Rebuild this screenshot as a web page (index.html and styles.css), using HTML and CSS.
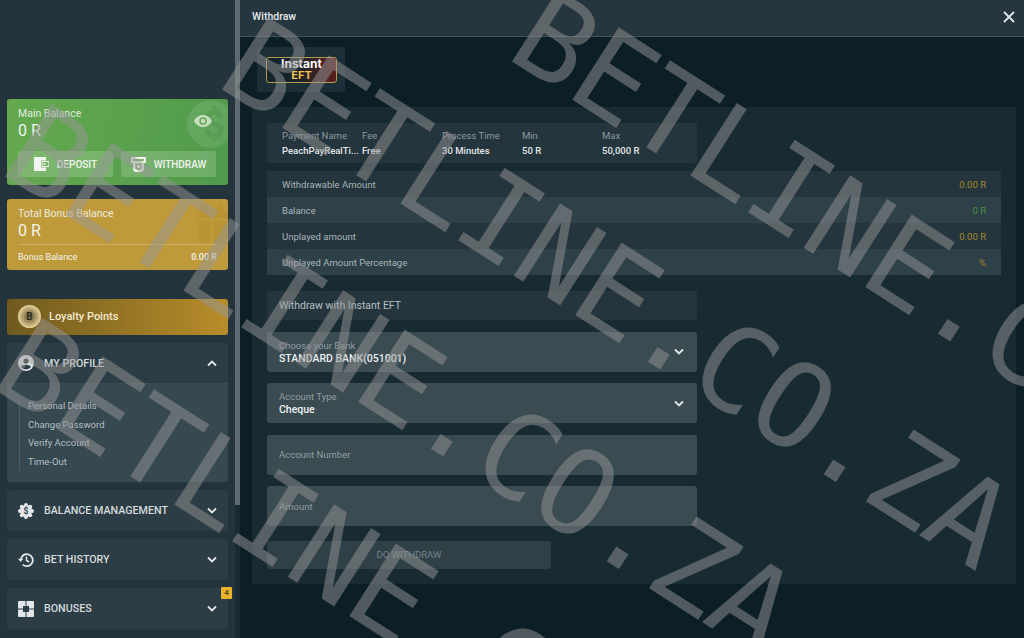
FILE: index.html
```html
<!DOCTYPE html>
<html lang="en">
<head>
    <meta charset="UTF-8">
    <meta name="viewport" content="width=device-width, initial-scale=1.0">
    <title>Withdraw</title>
    <link rel="stylesheet" href="styles.css">
</head>
<body>

<div class="layout">
    <!-- Left menu -->
    <aside class="sidebar">
        <div class="card card-main">
            <svg class="card-bg" width="41" height="50" viewBox="0 0 41 50"><circle cx="24" cy="25" r="24" fill="#fff" opacity=".1"/><text x="27" y="39" font-size="38" font-weight="700" text-anchor="middle" fill="#3f8a3f" opacity=".28" font-family="Roboto, sans-serif">$</text></svg>
            <svg class="eye" width="18" height="12" viewBox="0 0 24 16"><path fill-rule="evenodd" d="M12 0C6.500 0 2.300 3.300 0 8c2.300 4.700 6.500 8 12 8s9.700-3.300 12-8c-2.300-4.700-6.500-8-12-8zm0 13a5 5 0 1 1 0-10 5 5 0 0 1 0 10zm0-8a3 3 0 1 0 0 6 3 3 0 0 0 0-6z" fill="#c5dfbd"/></svg>
            <div class="card-label">Main Balance</div>
            <div class="card-amount">0 R</div>
            <div class="card-actions">
                <div class="card-btn">
                    <svg width="15" height="14" viewBox="0 0 15 14"><path d="M0 0h12v3.500H7v7h5V14H0z" fill="#f2f5ef"/><path d="M8 4.500h7v5H8z" fill="none" stroke="#f2f5ef"/><circle cx="10.500" cy="7" r="1" fill="#f2f5ef"/></svg>
                    DEPOSIT
                </div>
                <div class="card-btn">
                    <svg width="15" height="15" viewBox="0 0 15 15"><path d="M0 0h15v6h-2v7l-2 2H4l-2-2V6H0z" fill="#f2f5ef"/><rect x="2" y="2" width="11" height="2" fill="#7fb26f"/><path d="M4.500 6.500h6v5l-1 1h-4l-1-1z" fill="#7fb26f"/><rect x="6" y="8" width="3" height="3" fill="#f2f5ef"/></svg>
                    WITHDRAW
                </div>
            </div>
        </div>

        <div class="card card-bonus">
            <svg class="card-bg" width="38" height="44" viewBox="0 0 38 44"><path d="M6 12h32v7H6zM9 22h12v22H9zM24 22h14v22H24zM14 4l7 7h3l7-7 4 4-4 4H10L9 8z" fill="#a98427" opacity=".25"/></svg>
            <div class="card-label">Total Bonus Balance</div>
            <div class="card-amount">0 R</div>
            <div class="bonus-row">
                <span>Bonus Balance</span>
                <span class="bonus-value">0.00 R</span>
            </div>
        </div>

        <div class="loyalty">
            <div class="coin">B</div>
            Loyalty Points
        </div>

        <div class="menu-item menu-open">
            <div class="menu-head">
                <svg class="menu-icon" width="16" height="16" viewBox="0 0 16 16"><circle cx="8" cy="8" r="8" fill="#e3e7e9"/><circle cx="8" cy="6" r="2.600" fill="#2c3d45"/><path d="M3 12c.8-1.500 3-2.200 5-2.200s4.200.7 5 2.200a6.300 6.300 0 0 1-10 0z" fill="#2c3d45"/></svg>
                <span class="menu-title">MY PROFILE</span>
                <svg class="chevron" width="10" height="7" viewBox="0 0 10 7"><path d="M1 5.500l4-4 4 4" fill="none" stroke="#e3e7e9" stroke-width="1.800"/></svg>
            </div>
            <div class="submenu">
                <div class="submenu-links">
                    <div>Personal Details</div>
                    <div>Change Password</div>
                    <div>Verify Account</div>
                    <div>Time-Out</div>
                </div>
            </div>
        </div>

        <div class="menu-item">
            <div class="menu-head">
                <svg class="menu-icon" width="16" height="16" viewBox="0 0 16 16"><g fill="#e3e7e9"><circle cx="8" cy="8" r="6"/><circle cx="8" cy="2" r="2"/><circle cx="8" cy="14" r="2"/><circle cx="2" cy="8" r="2"/><circle cx="14" cy="8" r="2"/><circle cx="3.800" cy="3.800" r="2"/><circle cx="12.200" cy="3.800" r="2"/><circle cx="3.800" cy="12.200" r="2"/><circle cx="12.200" cy="12.200" r="2"/></g><text x="8" y="11" font-size="8.500" font-weight="700" text-anchor="middle" fill="#2c3d45" font-family="Roboto, sans-serif">$</text></svg>
                <span class="menu-title">BALANCE MANAGEMENT</span>
                <svg class="chevron" width="10" height="7" viewBox="0 0 10 7"><path d="M1 1.500l4 4 4-4" fill="none" stroke="#e3e7e9" stroke-width="1.800"/></svg>
            </div>
        </div>

        <div class="menu-item">
            <div class="menu-head">
                <svg class="menu-icon" width="16" height="16" viewBox="0 0 16 16"><path d="M2.800 7.500a6 6 0 1 1 1.900 5.100" fill="none" stroke="#e3e7e9" stroke-width="1.800"/><path d="M0 6.800h5.400L2.700 10z" fill="#e3e7e9"/><path d="M8.500 4.500v4l2.700 1.500" fill="none" stroke="#e3e7e9" stroke-width="1.500"/></svg>
                <span class="menu-title">BET HISTORY</span>
                <svg class="chevron" width="10" height="7" viewBox="0 0 10 7"><path d="M1 1.500l4 4 4-4" fill="none" stroke="#e3e7e9" stroke-width="1.800"/></svg>
            </div>
        </div>

        <div class="menu-item">
            <span class="badge">4</span>
            <div class="menu-head">
                <svg class="menu-icon" width="16" height="16" viewBox="0 0 16 16"><rect width="16" height="16" rx="1" fill="#e3e7e9"/><path d="M8 0v5M8 11v5M0 8h5M11 8h5" stroke="#2c3d45" stroke-width="1"/><rect x="5" y="5" width="6" height="6" fill="#2c3d45"/></svg>
                <span class="menu-title">BONUSES</span>
                <svg class="chevron" width="10" height="7" viewBox="0 0 10 7"><path d="M1 1.500l4 4 4-4" fill="none" stroke="#e3e7e9" stroke-width="1.800"/></svg>
            </div>
        </div>
    </aside>

    <div class="scrollbar"><div class="scrollbar-thumb"></div></div>

    <!-- Withdraw panel -->
    <main class="main">
        <header class="topbar">
            <span>Withdraw</span>
            <svg width="12" height="12" viewBox="0 0 12 12"><path d="M1 1l10 10M11 1L1 11" stroke="#dfe5e8" stroke-width="1.800"/></svg>
        </header>

        <div class="content">
            <div class="method-tab">
                <div class="method-logo">
                    <span class="logo-top">Instant</span>
                    <span class="logo-bottom">EFT</span>
                </div>
            </div>

            <div class="panel">
                <div class="info-box">
                    <div class="info-col"><span>Payment Name</span><b>PeachPayRealTi...</b></div>
                    <div class="info-col"><span>Fee</span><b>Free</b></div>
                    <div class="info-col"><span>Process Time</span><b>30 Minutes</b></div>
                    <div class="info-col"><span>Min</span><b>50 R</b></div>
                    <div class="info-col"><span>Max</span><b>50,000 R</b></div>
                </div>

                <div class="stat-list">
                    <div class="stat-row"><span>Withdrawable Amount</span><span class="gold">0.00 R</span></div>
                    <div class="stat-row"><span>Balance</span><span class="green">0 R</span></div>
                    <div class="stat-row"><span>Unplayed amount</span><span class="gold">0.00 R</span></div>
                    <div class="stat-row"><span>Unplayed Amount Percentage</span><span class="gold">%</span></div>
                </div>

                <div class="form-title">Withdraw with Instant EFT</div>

                <div class="field field-select">
                    <div>
                        <div class="field-label">Choose your Bank</div>
                        <div class="field-value">STANDARD BANK(051001)</div>
                    </div>
                    <svg width="10" height="7" viewBox="0 0 10 7"><path d="M1 1.500l4 4 4-4" fill="none" stroke="#e3e7e9" stroke-width="1.800"/></svg>
                </div>
                <div class="field field-select">
                    <div>
                        <div class="field-label">Account Type</div>
                        <div class="field-value">Cheque</div>
                    </div>
                    <svg width="10" height="7" viewBox="0 0 10 7"><path d="M1 1.500l4 4 4-4" fill="none" stroke="#e3e7e9" stroke-width="1.800"/></svg>
                </div>
                <div class="field"><div class="field-label">Account Number</div></div>
                <div class="field"><div class="field-label">Amount</div></div>

                <div class="submit">DO WITHDRAW</div>
            </div>
        </div>
    </main>
</div>

<!-- Watermark over everything -->
<div class="watermark">
    <span class="wm wm-1">BETLINE.CO.ZA</span>
    <span class="wm wm-2">BETLINE.CO.ZA</span>
    <span class="wm wm-3">BETLINE.CO.ZA</span>
    <span class="wm wm-4">BETLINE.CO.ZA</span>
</div>

</body>
</html>
```

FILE: styles.css
```css
* {
    box-sizing: border-box;
}

html, body {
    margin: 0;
    height: 100%;
    overflow: hidden;
}

body {
    font-family: Roboto, "Liberation Sans", sans-serif;
    font-size: 10px;
    color: #cfd6d9;
    background-color: #0c1e26;
}

.layout {
    display: flex;
    height: 638px;
}

/* Sidebar */
.sidebar {
    width: 235px;
    flex-shrink: 0;
    padding: 99px 7px 0;
    background-color: #24343c;
    overflow: hidden;
}

.scrollbar {
    width: 5px;
    background-color: #1a2a32;
}

.scrollbar-thumb {
    height: 505px;
    background-color: #5d6a71;
}

.card {
    position: relative;
    border-radius: 3px;
    color: #f2f4ef;
    padding: 8px 11px 0;
    overflow: hidden;
}

.card-main {
    height: 86px;
    width: 221px;
    background: linear-gradient(100deg, #65a94f, #4f9a4b);
}

.card-bonus {
    height: 71px;
    width: 221px;
    margin-top: 14px;
    background-color: #bf9a3a;
}

.card-bg {
    position: absolute;
    top: 0;
    right: 0;
}

.eye {
    position: absolute;
    top: 16px;
    right: 16px;
}

.card-label {
    position: relative;
    font-size: 10.500px;
    line-height: 14px;
    opacity: .9;
}

.card-amount {
    position: relative;
    font-size: 16px;
    line-height: 18px;
    margin-top: 1px;
}

.card-actions {
    display: flex;
    gap: 8px;
    margin-top: 11px;
}

.card-btn {
    width: 95px;
    height: 26px;
    display: flex;
    align-items: center;
    justify-content: center;
    gap: 8px;
    border-radius: 2px;
    background-color: rgba(255, 255, 255, .18);
    font-size: 10px;
    font-weight: 500;
}

.bonus-row {
    position: relative;
    display: flex;
    justify-content: space-between;
    margin-top: 4px;
    padding-top: 7px;
    border-top: 1px solid rgba(255, 255, 255, .2);
    font-size: 9px;
}

.bonus-value {
    font-weight: 500;
}

.loyalty {
    width: 221px;
    height: 36px;
    margin-top: 29px;
    padding: 0 0 2px 11px;
    display: flex;
    align-items: center;
    gap: 8px;
    border-radius: 3px;
    background: linear-gradient(90deg, #6f5a1f, #b88d2a);
    color: #f3ead0;
    font-size: 11px;
    font-weight: 500;
}

.coin {
    width: 23px;
    height: 23px;
    border-radius: 50%;
    background: radial-gradient(circle, #8e7b52 25%, #e6d29a 70%);
    color: #2a2a20;
    font-size: 10px;
    font-weight: 700;
    line-height: 23px;
    text-align: center;
}

.menu-item {
    position: relative;
    width: 221px;
    margin-top: 8px;
    border-radius: 3px;
    background-color: #2c3d45;
}

.menu-head {
    height: 41px;
    display: flex;
    align-items: center;
    padding: 0 11px;
    color: #d5dbde;
    font-size: 10.700px;
    font-weight: 500;
}

.menu-title {
    flex: 1;
    margin-left: 10px;
}

.menu-open {
    height: 139px;
}

.menu-open .menu-head {
    border-bottom: 1px solid #3b4c54;
}

.submenu {
    padding: 13px 0 0 12px;
    background-color: #364850;
    height: 98px;
    border-radius: 0 0 3px 3px;
}

.submenu-links {
    border-left: 1px solid #4c5d64;
    padding-left: 8px;
    font-size: 9.500px;
    line-height: 18.500px;
    color: #b5bfc3;
}

.badge {
    position: absolute;
    top: -1px;
    right: -4px;
    width: 11px;
    height: 12px;
    border-radius: 1px;
    background-color: #e7b32c;
    color: #5b4a14;
    font-size: 8px;
    font-weight: 700;
    line-height: 12px;
    text-align: center;
}

/* Main */
.main {
    flex: 1;
    min-width: 0;
}

.topbar {
    height: 37px;
    display: flex;
    align-items: center;
    justify-content: space-between;
    padding: 0 9px 3px 12px;
    background-color: #26363e;
    border-bottom: 1px solid #40525a;
    color: #e5eaec;
    font-size: 10.500px;
    font-weight: 500;
}

.content {
    padding: 10px 8px 0 12px;
}

.method-tab {
    width: 88px;
    height: 45px;
    margin-left: 5px;
    padding: 10px 0 0 9px;
    border-radius: 2px;
    background-color: #1c2f37;
}

.method-logo {
    width: 71px;
    height: 26px;
    display: flex;
    flex-direction: column;
    align-items: center;
    border: 1px solid #b79a4e;
    border-radius: 3px;
    background: linear-gradient(90deg, #15242b 40%, #5b1f1c);
    font-family: Inter, Roboto, sans-serif;
    font-weight: 700;
}

.logo-top {
    font-size: 12px;
    line-height: 12px;
    color: #fff;
}

.logo-bottom {
    font-size: 11px;
    line-height: 11px;
    color: #f0c050;
}

.panel {
    margin-top: 15px;
    height: 477px;
    padding: 16px 15px 0;
    background-color: #182b33;
    border-radius: 2px;
}

.info-box {
    width: 430px;
    height: 40px;
    display: flex;
    padding: 5px 15px 0;
    border-radius: 2px;
    background-color: #24353d;
}

.info-col {
    display: flex;
    flex-direction: column;
    width: 80px;
    font-size: 9.500px;
    line-height: 15px;
}

.info-col span {
    color: #8d999f;
}

.info-col b {
    color: #e2e7e9;
    font-weight: 500;
}

.stat-list {
    margin-top: 8px;
}

.stat-row {
    height: 26px;
    display: flex;
    align-items: center;
    justify-content: space-between;
    padding: 0 15px;
    background-color: #24353d;
    color: #aab4b8;
    font-size: 9.500px;
}

.stat-row:nth-child(even) {
    background-color: #2e4048;
}

.gold {
    color: #a5892c;
}

.green {
    color: #4f8f3e;
}

.form-title {
    width: 430px;
    height: 29px;
    margin-top: 16px;
    padding-left: 12px;
    background-color: #24353d;
    border-radius: 2px;
    color: #b7c0c4;
    font-size: 10.500px;
    line-height: 29px;
}

.field {
    width: 430px;
    height: 40px;
    margin-top: 11.500px;
    display: flex;
    align-items: center;
    padding: 0 13px 0 12px;
    border-radius: 3px;
    background-color: #3a4b52;
}

.field-select {
    justify-content: space-between;
}

.field-label {
    font-size: 9.500px;
    line-height: 13px;
    color: #929ea3;
}

.field-value {
    font-size: 10.500px;
    line-height: 13px;
    font-weight: 500;
    color: #eef1f2;
}

.submit {
    width: 284px;
    height: 28px;
    margin-top: 15px;
    border-radius: 3px;
    background-color: #2f4047;
    color: #76838a;
    font-size: 9.500px;
    line-height: 28px;
    text-align: center;
}

/* Watermark */
.watermark {
    position: fixed;
    inset: 0;
    overflow: hidden;
    pointer-events: none;
}

.wm {
    position: absolute;
    font-family: "DejaVu Sans Mono", monospace;
    font-size: 118px;
    letter-spacing: -1.500px;
    line-height: 1;
    white-space: nowrap;
    color: rgba(150, 150, 150, .5);
    transform: rotate(32.600deg);
    transform-origin: 0 0;
}

.wm-1 {
    left: 558px;
    top: -28px;
}

.wm-2 {
    left: 268px;
    top: 0;
}

.wm-3 {
    left: 51px;
    top: 87px;
}

.wm-4 {
    left: 42px;
    top: 301px;
}
```
